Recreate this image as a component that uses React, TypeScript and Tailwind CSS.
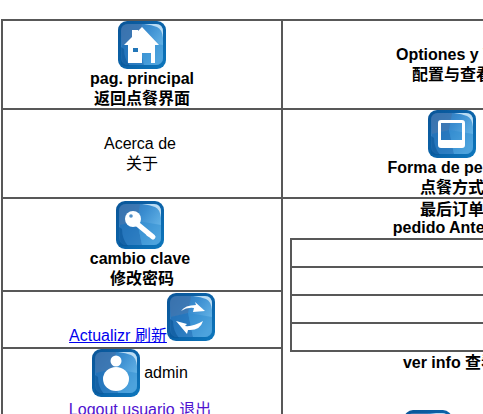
import type { ReactNode } from "react";

const font = "font-['Liberation_Sans','Noto_Sans_CJK_SC',sans-serif]";

function Tile({ id, children, className = "" }: { id: string; children: ReactNode; className?: string }) {
  return (
    <svg width="48" height="48" viewBox="0 0 48 48" className={"inline-block " + className}>
      <defs>
        <linearGradient id={id + "-edge"} x1="0" y1="0" x2="1" y2="1">
          <stop offset="0" stopColor="#0a5598" />
          <stop offset="0.6" stopColor="#0b66ac" />
          <stop offset="1" stopColor="#0d78bd" />
        </linearGradient>
        <linearGradient id={id + "-face"} x1="0" y1="0" x2="1" y2="0.7">
          <stop offset="0" stopColor="#2a6aab" />
          <stop offset="0.5" stopColor="#3a8dd0" />
          <stop offset="1" stopColor="#6cbaea" />
        </linearGradient>
      </defs>
      <rect width="48" height="48" rx="9" fill={`url(#${id}-edge)`} />
      <rect x="3" y="3" width="42" height="41" rx="7" fill={`url(#${id}-face)`} />
      {/* darker panels of the glass */}
      <path d="M3 10Q3 3 10 3H24L21 20L4 24Z" fill="#3f74ae" opacity="0.75" />
      <path d="M4 24L21 20L26 44H10Q4 44 4 36Z" fill="#1f6fb7" opacity="0.7" />
      <path d="M26 44L21 20L45 24V37Q45 44 38 44Z" fill="#2d8bcf" opacity="0.5" />
      <path d="M3 44Q8 46 12 45Q6 38 6 28L3 26Z" fill="#0a5598" opacity="0.6" />
      {/* gloss in the top right corner */}
      <path d="M26 3H38Q45 3 45 11V17Q44 8 39 6Q34 4 26 3Z" fill="#cfe8f8" opacity="0.85" />
      {children}
    </svg>
  );
}

const cell = "border-2 border-[#585858] p-0 text-center align-middle";

export default function App() {
  return (
    <div className={"h-[414px] w-[483px] overflow-hidden bg-white text-base leading-5 text-black " + font}>
      <table className="mt-[19px] ml-px w-[622px] table-fixed border-collapse">
        <colgroup>
          <col className="w-[280px]" />
          <col />
        </colgroup>
        <tbody>
          <tr className="h-[89px]">
            <td className={cell}>
              <div className="-mb-px flex flex-col items-center font-bold">
                <Tile id="home">
                  <path d="M24 6L41 24H37V42H33V32H24V42H10V24H6L14 16V9H20V10Z" fill="#fff" />
                  <rect x="15" y="27" width="5" height="4" fill="#2276b8" />
                </Tile>
                <span>pag. principal</span>
                <span>返回点餐界面</span>
              </div>
            </td>
            <td className={cell}>
              <div className="font-bold">Optiones y Ver</div>
              <div className="font-bold">配置与查看</div>
            </td>
          </tr>
          <tr className="h-[89px]">
            <td className={cell}>
              <div className="pr-1">Acerca de</div>
              <div>关于</div>
            </td>
            <td className={cell}>
              <div className="-mb-px flex flex-col items-center font-bold">
                <Tile id="order">
                  <path
                    fillRule="evenodd"
                    d="M13 10H34Q37 10 37 13V35Q37 38 34 38H13Q10 38 10 35V13Q10 10 13 10ZM13 13V30H34V13Z"
                    fill="#fff"
                  />
                </Tile>
                <span>Forma de pedido</span>
                <span>点餐方式</span>
              </div>
            </td>
          </tr>
          <tr className="h-[93px]">
            <td className={cell}>
              <div className="flex flex-col items-center font-bold">
                <div className="flex flex-col items-center pr-1">
                  <Tile id="key">
                    <circle cx="17" cy="18" r="8" fill="#fff" />
                    <path d="M20 22L37 36" stroke="#fff" strokeWidth="5" strokeLinecap="round" />
                    <path d="M27 28L31 35L34 36L36 33Z" fill="#fff" />
                    <circle cx="15" cy="15" r="1.8" fill="#4f8fc8" />
                  </Tile>
                  <span>cambio clave</span>
                </div>
                <span>修改密码</span>
              </div>
            </td>
            <td rowSpan={3} className={cell + " align-top"}>
              <div className="pt-px font-bold">最后订单</div>
              <div className="-mt-0.5 font-bold">pedido Anterior</div>
              <table className="mx-auto w-[324px] border-collapse">
                <tbody>
                  {[1, 2, 3, 4].map((row) => (
                    <tr key={row} className="h-7">
                      <td className="border-2 border-[#585858]" />
                    </tr>
                  ))}
                </tbody>
              </table>
              <div className="mt-[1px] pr-1 font-bold">
                ver info <span>查看</span>
              </div>
              <div className="mt-[37px] mr-[44px] pr-1">
                <Tile id="next">
                  <circle cx="24" cy="24" r="12" fill="#fff" />
                </Tile>
              </div>
            </td>
          </tr>
          <tr className="h-[57px]">
            <td className={cell}>
              <a href="#" className="text-[#0000ee] underline">Actualizr 刷新</a>
              <Tile id="refresh" className="align-baseline">
                <path d="M14 18Q18 12 29 12L28 9L38 18L26 19L27 15Q20 14 14 18Z" fill="#fff" />
                <path d="M9 28L20 31L18 33Q26 34 36 28Q33 38 21 37L20 41Z" fill="#fff" />
              </Tile>
            </td>
          </tr>
          <tr>
            <td className={cell + " align-top"}>
              <div className="pr-1">
                <Tile id="user" className="align-middle">
                  <circle cx="24" cy="12" r="5.5" fill="#fff" />
                  <ellipse cx="24" cy="30" rx="13" ry="12" fill="#fff" />
                </Tile>
                <span className="ml-1 align-middle">admin</span>
              </div>
              <a href="#" className="mt-[3px] block pr-1 pb-8 text-[#4f12d0] underline">Logout usuario 退出</a>
            </td>
          </tr>
        </tbody>
      </table>
    </div>
  );
}
